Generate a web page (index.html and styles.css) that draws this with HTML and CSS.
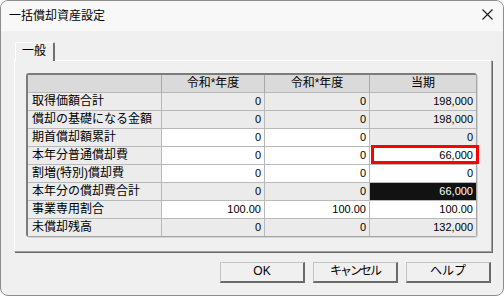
FILE: index.html
```html
<!DOCTYPE html>
<html lang="ja">
<head>
<meta charset="utf-8">
<link rel="stylesheet" href="styles.css">
</head>
<body>
<div class="window">
  <div class="titlebar">
    <span class="title">一括償却資産設定</span>
    <svg class="close" width="11" height="11" viewBox="0 0 11 11"><path d="M0.5 0.5 L10.5 10.5 M10.5 0.5 L0.5 10.5" stroke="#1a1a1a" stroke-width="1.1" fill="none"/></svg>
  </div>
  <div class="body">
    <div class="tabs"><div class="tab">一般</div></div>
    <div class="panel">
      <div class="grid">
        <div class="c h"></div><div class="c h">令和*年度</div><div class="c h">令和*年度</div><div class="c h last">当期</div>

        <div class="c l">取得価額合計</div><div class="c n g">0</div><div class="c n g">0</div><div class="c n g last">198,000</div>
        <div class="c l">償却の基礎になる金額</div><div class="c n g">0</div><div class="c n g">0</div><div class="c n g last">198,000</div>
        <div class="c l">期首償却額累計</div><div class="c n w">0</div><div class="c n w">0</div><div class="c n g last">0</div>
        <div class="c l">本年分普通償却費</div><div class="c n w">0</div><div class="c n w">0</div><div class="c n w last sel">66,000</div>
        <div class="c l">割増(特別)償却費</div><div class="c n w">0</div><div class="c n w">0</div><div class="c n w last">0</div>
        <div class="c l">本年分の償却費合計</div><div class="c n g">0</div><div class="c n g">0</div><div class="c n dark last">66,000</div>
        <div class="c l">事業専用割合</div><div class="c n w">100.00</div><div class="c n w">100.00</div><div class="c n w last">100.00</div>
        <div class="c l end">未償却残高</div><div class="c n g end">0</div><div class="c n g end">0</div><div class="c n g last end">132,000</div>
      </div>
    </div>
    <div class="buttons">
      <div class="btn">OK</div>
      <div class="btn narrow">キャンセル</div>
      <div class="btn">ヘルプ</div>
    </div>
  </div>
</div>
</body>
</html>
```

FILE: styles.css
```css
html, body {
  margin: 0;
  padding: 0;
  background: #ffffff;
}

.window {
  width: 504px;
  height: 296px;
  box-sizing: border-box;
  border: 1px solid #8d8d8d;
  border-radius: 8px;
  overflow: hidden;
  background: #f0f0f0;
  font-family: "Liberation Sans", "Noto Sans CJK JP", sans-serif;
  font-size: 12px;
  color: #000;
}

.titlebar {
  height: 30px;
  background: #f8f8f8;
  display: flex;
  align-items: center;
  justify-content: space-between;
  padding: 0 10px 0 8px;
}

.title {
  font-size: 12px;
  line-height: 14px;
  margin-top: -1px;
}

.close {
  display: block;
  margin-top: -3px;
}

.body {
  padding: 11px 11px 0 13px;
}

.tabs {
  display: flex;
  padding-left: 1px;
  position: relative;
  z-index: 2;
}

.tab {
  height: 18px;
  line-height: 17px;
  padding: 0 7px 0 6px;
  background: #f0f0f0;
  border-top: 1px solid #ffffff;
  border-left: 1px solid #ffffff;
  border-right: 2px solid #6f6f6f;
  border-radius: 2px 2px 0 0;
  margin-bottom: -1px;
  box-sizing: content-box;
  font-size: 12px;
}

.panel {
  height: 192px;
  box-sizing: border-box;
  border-top: 1px solid #ffffff;
  border-left: 1px solid #ffffff;
  border-right: 1px solid #a0a0a0;
  border-bottom: 1px solid #a0a0a0;
  box-shadow: 1px 1px 0 #6a6a6a;
  padding: 12px 0 0 11px;
}

.grid {
  width: 451px;
  box-sizing: border-box;
  display: grid;
  grid-template-columns: 134px 103px 105px 106px;
  border-top: 2px solid #7c7c7c;
  border-left: 2px solid #7c7c7c;
  border-right: 1px solid #a6a6a6;
  border-bottom: 1px solid #a6a6a6;
  border-radius: 3px;
  box-shadow: 1px 1px 0 #d4d4d4;
  background: #ffffff;
}

.c {
  height: 18px;
  box-sizing: border-box;
  line-height: 17px;
  border-right: 1px solid #b8b8b8;
  border-bottom: 1px solid #b8b8b8;
  white-space: nowrap;
  overflow: visible;
}

.c.last {
  border-right: none;
}

.c.end {
  border-bottom: none;
  height: 17px;
}

.h {
  background: #dadada;
  text-align: center;
  border-right-color: #a8a8a8;
}

.l {
  background: #ececec;
  padding-left: 4px;
}

.n {
  text-align: right;
  padding-right: 3px;
  font-size: 11px;
}

.g {
  background: #ebebeb;
}

.w {
  background: #ffffff;
}

.dark {
  background: #121212;
  color: #ffffff;
}

.sel {
  position: relative;
}

.sel::after {
  content: "";
  position: absolute;
  top: -2px;
  left: 1px;
  right: -3px;
  bottom: 0;
  border: 3px solid #ff0000;
}

.buttons {
  display: flex;
  justify-content: flex-end;
  gap: 8px;
  margin-top: 10px;
  margin-right: 1px;
}

.btn {
  width: 85px;
  height: 21px;
  box-sizing: border-box;
  background: #f0f0f0;
  border-top: 1px solid #c4c4c4;
  border-left: 1px solid #c4c4c4;
  border-right: 2px solid #6a6a6a;
  border-bottom: 2px solid #6a6a6a;
  text-align: center;
  line-height: 17px;
  font-size: 12px;
}

.btn.narrow {
  letter-spacing: -2px;
}
```
